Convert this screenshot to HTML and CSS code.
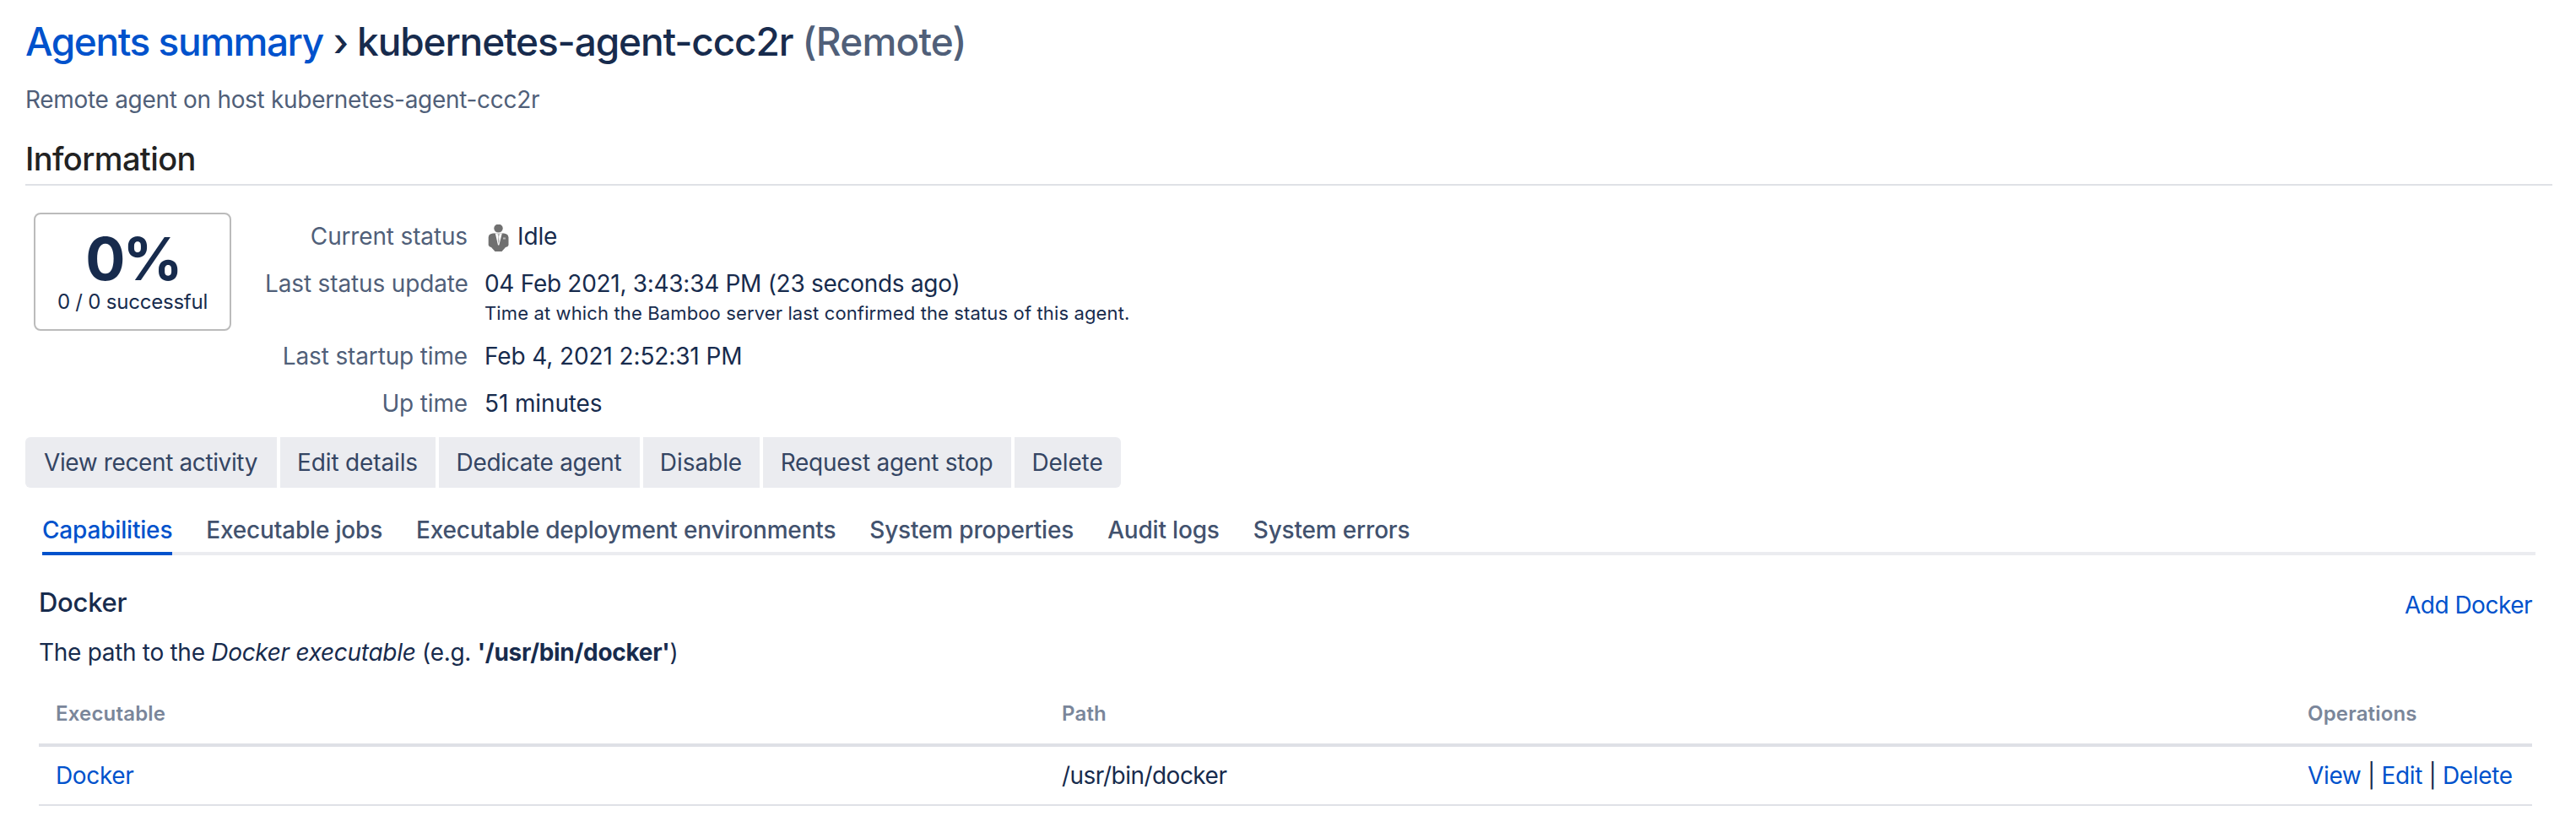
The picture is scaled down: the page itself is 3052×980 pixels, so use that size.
FILE: index.html
```html
<!DOCTYPE html>
<html lang="en">
<head>
<meta charset="utf-8">
<title>kubernetes-agent-ccc2r</title>
<link rel="stylesheet" href="styles.css">
</head>
<body>
<main class="page">
  <header>
    <h1 class="title"><a class="title-link" href="#">Agents summary</a><span class="title-sep">›</span><span class="title-name">kubernetes-agent-ccc2r</span><span class="title-type">(Remote)</span></h1>
    <p class="subtitle">Remote agent on host kubernetes-agent-ccc2r</p>
  </header>

  <h2 class="section-title">Information</h2>

  <section class="info">
    <div class="score">
      <div class="score-value">0%</div>
      <div class="score-label">0 / 0 successful</div>
    </div>
    <dl class="details">
      <dt>Current status</dt>
      <dd class="status"><svg class="agent-icon" viewBox="0 0 32 32" aria-hidden="true"><g fill="#707070"><ellipse cx="16.5" cy="4.6" rx="5.2" ry="5"/><path d="M10 10.5 7.300 11.200Q5 12 4.700 15V24.500Q5.500 26.500 8 27L12.500 32H20.500L25 27Q27.800 26.500 28.500 24.500V15Q28 12 25.700 11.200L23 10.500Z"/></g><path fill="#fff" d="M12.800 10.500H20.800L17.300 24.500H16Z"/><path fill="#b5b5b5" d="M15.500 11h2.600l-1 3.500 .5 5-.8 4-1-4 .6-5zM22 15.500h3v2h-3z"/></svg>Idle</dd>
      <dt>Last status update</dt>
      <dd><span class="timestamp">04 Feb 2021, 3:43:34 PM (23 seconds ago)</span><small class="hint">Time at which the Bamboo server last confirmed the status of this agent.</small></dd>
      <dt>Last startup time</dt>
      <dd>Feb 4, 2021 2:52:31 PM</dd>
      <dt>Up time</dt>
      <dd>51 minutes</dd>
    </dl>
  </section>

  <div class="buttons">
    <button class="btn btn-activity">View recent activity</button>
    <button class="btn btn-edit">Edit details</button>
    <button class="btn btn-dedicate">Dedicate agent</button>
    <button class="btn btn-disable">Disable</button>
    <button class="btn btn-stop">Request agent stop</button>
    <button class="btn btn-delete">Delete</button>
  </div>

  <nav class="tabs">
    <a class="tab tab-active" href="#">Capabilities</a>
    <a class="tab" href="#">Executable jobs</a>
    <a class="tab" href="#">Executable deployment environments</a>
    <a class="tab" href="#">System properties</a>
    <a class="tab" href="#">Audit logs</a>
    <a class="tab" href="#">System errors</a>
  </nav>

  <section class="capability">
    <div class="capability-head">
      <h3 class="capability-title">Docker</h3>
      <a class="link add-link" href="#">Add Docker</a>
    </div>
    <p class="description">The path to the <em>Docker executable</em> (e.g. <strong>'/usr/bin/docker'</strong>)</p>
    <table class="table">
      <thead>
        <tr><th class="col-exec">Executable</th><th class="col-path">Path</th><th class="col-ops">Operations</th></tr>
      </thead>
      <tbody>
        <tr><td><a class="link" href="#">Docker</a></td><td class="path">/usr/bin/docker</td><td><a class="link" href="#">View</a> | <a class="link" href="#">Edit</a> | <a class="link" href="#">Delete</a></td></tr>
      </tbody>
    </table>
  </section>
</main>
</body>
</html>
```
FILE: styles.css
```css
* { box-sizing: border-box; }

body {
  margin: 0;
  background: #fff;
  color: #172b4d;
  font: 400 28px/40px Inter, "Liberation Sans", sans-serif;
}

a { text-decoration: none; }
h1, h2, h3, p, dl, dd { margin: 0; }

.page { padding: 21px 28px 0 30px; }

.title {
  display: flex;
  font-size: 46px;
  line-height: 56px;
  font-weight: 500;
}
.title-link { color: #0052cc; letter-spacing: -1.45px; }
.title-sep { margin: 0 10px 0 12px; }
.title-name { letter-spacing: -1.14px; }
.title-type { margin-left: 11px; color: #505f79; letter-spacing: -0.8px; }

.subtitle { margin-top: 21px; color: #505f79; letter-spacing: -0.31px; }

.section-title {
  margin-top: 26px;
  height: 56px;
  border-bottom: 2px solid #dfe1e6;
  color: #222;
  font-size: 38px;
  line-height: 48px;
  font-weight: 500;
  letter-spacing: -0.6px;
}

.info { display: flex; padding: 32px 0 0 10px; }

.score {
  width: 234px;
  height: 140px;
  padding-top: 15px;
  border: 2px solid #bbb;
  border-radius: 8px;
  text-align: center;
}
.score-value { padding-left: 1px; font-size: 70px; line-height: 76px; font-weight: 700; letter-spacing: -3px; }
.score-label { font-size: 24px; line-height: 26px; letter-spacing: -0.22px; }

.details {
  display: grid;
  grid-template-columns: 240px auto;
  column-gap: 20px;
  row-gap: 16px;
  margin-left: 40px;
  padding-top: 8px;
}
.details dt { color: #505f79; text-align: right; letter-spacing: -0.15px; white-space: nowrap; }
.status { display: flex; }
.agent-icon { width: 32px; height: 32px; margin: 6px 7px 0 0; }
.details dd { letter-spacing: -0.12px; }
.timestamp { display: block; letter-spacing: -0.29px; }
.hint { display: block; font-size: 22px; line-height: 30px; letter-spacing: 0.13px; }

.buttons { display: flex; gap: 4px; margin-top: 20px; }
.btn {
  height: 60px;
  padding: 0 1px 0 0;
  border: 0;
  background: #ebecf0;
  color: #344563;
  font: inherit;
}
.btn:first-child { border-radius: 6px 0 0 6px; }
.btn:last-child { border-radius: 0 6px 6px 0; }
.btn-activity { width: 298px; letter-spacing: -0.38px; }
.btn-edit { width: 184px; letter-spacing: -0.15px; }
.btn-dedicate { width: 238px; letter-spacing: -0.33px; }
.btn-disable { width: 138px; letter-spacing: -0.07px; }
.btn-stop { width: 294px; letter-spacing: -0.25px; }
.btn-delete { width: 126px; letter-spacing: -0.1px; }

.tabs {
  display: flex;
  gap: 40px;
  height: 80px;
  margin: 0 20px;
  padding-top: 30px;
  border-bottom: 4px solid #ebecf0;
}
.tab { height: 50px; color: #42526e; font-weight: 500; letter-spacing: -0.185px; }
.tab-active { color: #0052cc; border-bottom: 4px solid #0052cc; }

.capability { padding: 36px 24px 0 16px; }
.capability-head { display: flex; justify-content: space-between; }
.capability-title { font-size: 31px; font-weight: 500; letter-spacing: -0.25px; }
.link { color: #0052cc; letter-spacing: -0.35px; }
.add-link { padding-top: 3px; letter-spacing: -0.5px; }
.description { margin-top: 16px; letter-spacing: -0.3px; }

.table {
  width: 100%;
  margin-top: 33px;
  border-collapse: separate;
  border-spacing: 0;
  table-layout: fixed;
}
.table th {
  padding: 0 0 15px 20px;
  border-bottom: 4px solid #dfe1e6;
  color: #7a869a;
  font-size: 24px;
  font-weight: 600;
  text-align: left;
  letter-spacing: 0.18px;
}
.table td { padding: 14px 0 14px 20px; border-bottom: 2px solid #dfe1e6; letter-spacing: -0.35px; }
.table td.path { letter-spacing: -0.52px; }
.col-exec { width: 1192px; }
.col-ops { width: 286px; }
```
